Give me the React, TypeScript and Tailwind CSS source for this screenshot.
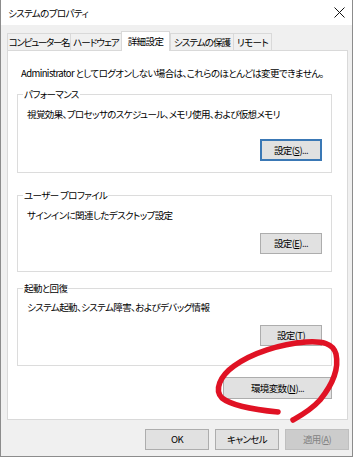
import React from 'react';

const tabs = [
  { label: 'コンピューター名', w: 'w-[63px] tracking-[-1.3px]' },
  { label: 'ハードウェア', w: 'w-[51px] tracking-[-0.9px]' },
  { label: '詳細設定', w: 'w-[49px]', active: true },
  { label: 'システムの保護', w: 'w-[63px] tracking-[-0.9px]' },
  { label: 'リモート', w: 'w-[39px]' },
];

function Btn({ children, className = '', primary = false, disabled = false }: { children: React.ReactNode; className?: string; primary?: boolean; disabled?: boolean }) {
  return (
    <div
      className={`flex items-center justify-center whitespace-nowrap ${
        disabled
          ? 'bg-[#cccccc] border border-[#bfbfbf] text-[#838383]'
          : primary
          ? 'bg-[#e1e1e1] border-2 border-[#3a78b5]'
          : 'bg-[#e1e1e1] border border-[#adadad]'
      } ${className}`}
    >
      {children}
    </div>
  );
}

function Group({ title, desc, className, descPad, btnGap, button }: { title: string; desc: string; className: string; descPad: string; btnGap: string; button: React.ReactNode }) {
  return (
    <div className={`relative w-[315px] border border-[#dcdcdc] flex flex-col pl-[9px] pr-[9px] ${className}`}>
      <span className="absolute -top-[7px] left-[5px] bg-white px-[1px] leading-[12px]">{title}</span>
      <div className={`leading-[12px] whitespace-nowrap ${descPad}`}>{desc}</div>
      <div className={`self-end ${btnGap}`}>{button}</div>
    </div>
  );
}

export default function App() {
  return (
    <div className="relative w-[355px] h-[457px] bg-white text-black text-[9.5px] tracking-[-0.6px] font-['Noto_Sans_CJK_JP',sans-serif] [font-feature-settings:'palt']">
      <div className="w-[353px] h-[457px] flex flex-col border-x border-b border-[#8c8c8c]">
        {/* title bar */}
        <div className="h-[25px] bg-white flex items-center justify-between pl-[7px] pr-[7px]">
          <span className="leading-[12px]">システムのプロパティ</span>
          <svg width="11" height="11" viewBox="0 0 11 11">
            <path d="M0.5 0.5 L10.5 10.5 M10.5 0.5 L0.5 10.5" stroke="#111" strokeWidth="1" />
          </svg>
        </div>

        <div className="flex-1 bg-[#f0f0f0] pl-[6px] flex flex-col">
          {/* tabs */}
          <div className="mt-[6px] h-[19px] flex items-end">
            {tabs.map((t) =>
              t.active ? (
                <div
                  key={t.label}
                  className={`${t.w} h-[20px] -mb-px relative z-10 bg-white border-x border-t border-[#d9d9d9] flex items-center justify-center whitespace-nowrap pb-[1px]`}
                >
                  {t.label}
                </div>
              ) : (
                <div
                  key={t.label}
                  className={`${t.w} h-[17px] bg-[#f0f0f0] border-t border-l border-[#d9d9d9] last:border-r flex items-center justify-center whitespace-nowrap`}
                >
                  {t.label}
                </div>
              )
            )}
          </div>

          {/* panel */}
          <div className="w-[341px] h-[370px] bg-white border border-[#d9d9d9] flex flex-col pl-[9px]">
            <div className="mt-[16px] ml-[4px] leading-[12px] whitespace-nowrap">
              Administrator としてログオンしない場合は、これらのほとんどは変更できません。
            </div>

            <Group
              title="パフォーマンス"
              desc="視覚効果、プロセッサのスケジュール、メモリ使用、および仮想メモリ"
              className="mt-[15px] h-[79px]"
              descPad="pt-[13px]"
              btnGap="mt-[19px]"
              button={
                <Btn primary className="w-[62px] h-[22px]">
                  設定(<span className="underline">S</span>)...
                </Btn>
              }
            />

            <Group
              title="ユーザー プロファイル"
              desc="サインインに関連したデスクトップ設定"
              className="mt-[22px] h-[77px]"
              descPad="pt-[13px]"
              btnGap="mt-[12px]"
              button={
                <Btn className="w-[62px] h-[21px]">
                  設定(<span className="underline">E</span>)...
                </Btn>
              }
            />

            <Group
              title="起動と回復"
              desc="システム起動、システム障害、およびデバッグ情報"
              className="mt-[16px] h-[78px]"
              descPad="pt-[12px]"
              btnGap="mt-[12px]"
              button={
                <Btn className="w-[62px] h-[21px]">
                  設定(<span className="underline">T</span>)
                </Btn>
              }
            />

            <div className="w-[315px] flex justify-end mt-[11px]">
              <Btn className="w-[109px] h-[22px]">
                環境変数(<span className="underline">N</span>)...
              </Btn>
            </div>
          </div>

          {/* dialog buttons */}
          <div className="w-[342px] flex justify-end gap-[6px] mt-[9px]">
            <Btn className="w-[64px] h-[21px]">OK</Btn>
            <Btn className="w-[64px] h-[21px]">キャンセル</Btn>
            <Btn disabled className="w-[64px] h-[21px]">
              適用(<span className="underline">A</span>)
            </Btn>
          </div>
        </div>
      </div>

      {/* hand-drawn red loop */}
      <svg className="absolute inset-0 pointer-events-none" width="355" height="457" viewBox="0 0 355 457">
        <path
          d="M278,412 C258,410 232,406 222,398 C214,390 220,376 234,366 C252,353 280,344 306,342 C322,341 333,343 336,354 C339,368 333,384 320,400 C311,410 300,416 293,420"
          fill="none"
          stroke="#e01224"
          strokeWidth="5.5"
          strokeLinecap="round"
        />
      </svg>
    </div>
  );
}
